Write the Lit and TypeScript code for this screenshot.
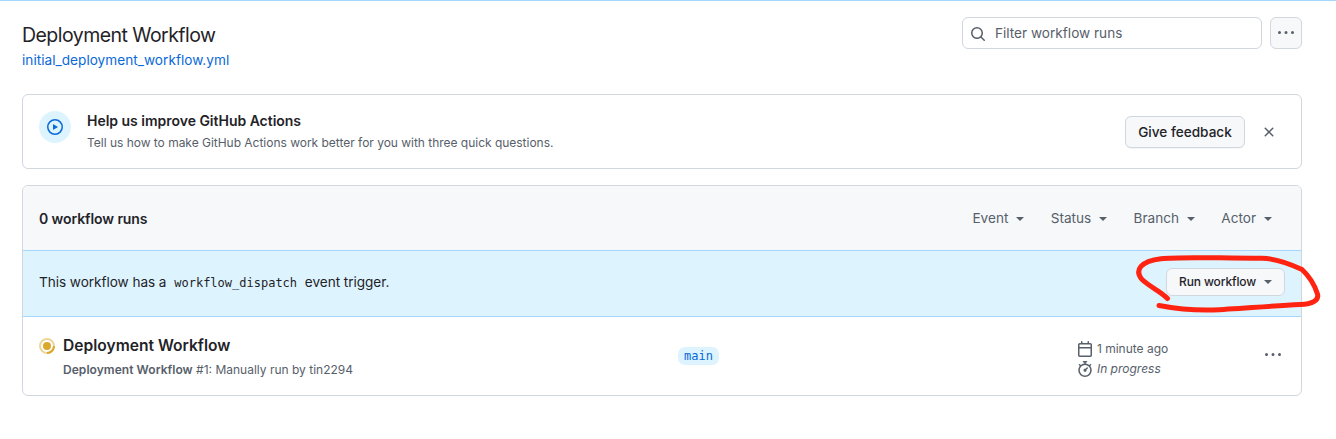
import { LitElement, html, css, svg } from "lit";
import { customElement } from "lit/decorators.js";

const icon = (d: string, cls = "", size = 16) => html`<svg class="icon ${cls}" width=${size} height=${size} viewBox="0 0 16 16" aria-hidden="true"><path fill-rule="evenodd" d=${d}></path></svg>`;

const SEARCH = "M10.68 11.74a6 6 0 0 1-7.922-8.982 6 6 0 0 1 8.982 7.922l3.04 3.04a.749.749 0 1 1-1.06 1.06ZM11.5 7a4.499 4.499 0 1 0-8.997 0A4.499 4.499 0 0 0 11.5 7Z";
const KEBAB = "M8 9a1.5 1.5 0 1 0 0-3 1.5 1.5 0 0 0 0 3ZM1.5 9a1.5 1.5 0 1 0 0-3 1.5 1.5 0 0 0 0 3Zm13 0a1.5 1.5 0 1 0 0-3 1.5 1.5 0 0 0 0 3Z";
const PLAY = "M8 0a8 8 0 1 1 0 16A8 8 0 0 1 8 0ZM1.5 8a6.5 6.5 0 1 0 13 0 6.5 6.5 0 0 0-13 0Zm4.879-2.773 4.264 2.559a.25.25 0 0 1 0 .428l-4.264 2.559A.25.25 0 0 1 6 10.559V5.442a.25.25 0 0 1 .379-.215Z";
const CLOSE = "M3.72 3.72a.75.75 0 0 1 1.06 0L8 6.94l3.22-3.22a.75.75 0 1 1 1.06 1.06L9.06 8l3.22 3.22a.75.75 0 1 1-1.06 1.06L8 9.06l-3.22 3.22a.75.75 0 0 1-1.06-1.06L6.94 8 3.72 4.78a.75.75 0 0 1 0-1.06Z";
const CALENDAR = "M4.75 0a.75.75 0 0 1 .75.75V2h5V.75a.75.75 0 0 1 1.5 0V2h1.25c.966 0 1.75.784 1.75 1.75v10.5A1.75 1.75 0 0 1 13.25 16H2.75A1.75 1.75 0 0 1 1 14.25V3.75C1 2.784 1.784 2 2.75 2H4V.75A.75.75 0 0 1 4.75 0ZM2.5 7.5v6.75c0 .138.112.25.25.25h10.5a.25.25 0 0 0 .25-.25V7.5Zm10.75-4H2.75a.25.25 0 0 0-.25.25V6h11V3.75a.25.25 0 0 0-.25-.25Z";
const STOPWATCH = "M5.75.75A.75.75 0 0 1 6.5 0h3a.75.75 0 0 1 0 1.5h-.75v1l-.001.041a6.724 6.724 0 0 1 3.464 1.435l.007-.006.75-.75a.749.749 0 1 1 1.06 1.06l-.75.75-.006.007a6.75 6.75 0 1 1-10.548 0L2.72 5.03l-.75-.75a.751.751 0 0 1 1.06-1.06l.75.75.007.006A6.72 6.72 0 0 1 7.25 2.541V1.5H6.5a.75.75 0 0 1-.75-.75ZM8 14.5a5.25 5.25 0 1 0 0-10.5 5.25 5.25 0 0 0 0 10.5Zm.389-6.7 1.33-1.33a.75.75 0 1 1 1.061 1.06L9.45 8.861A1.503 1.503 0 0 1 8 10.75a1.499 1.499 0 1 1 .389-2.95Z";

@customElement("app-root")
export class AppRoot extends LitElement {
  static styles = css`
    :host { display: block; position: relative; box-sizing: border-box; height: 439px; overflow: hidden; background: #fff; border-top: 1px solid #a6d8ff; padding: 16px 34px 0 22px; font: 13.6px/21px Inter, "Liberation Sans", sans-serif; color: #1f2328; }
    * { box-sizing: border-box; }
    .icon { display: block; flex: none; fill: #57606a; }
    .top { display: flex; align-items: flex-start; height: 77px; }
    .heading { flex: 1; padding-top: 3px; }
    h1 { margin: 0; font-size: 19.5px; line-height: 30px; font-weight: 400; letter-spacing: -.54px; }
    .file { display: block; color: #0969da; line-height: 20px; letter-spacing: .03px; text-decoration: none; }
    .filter { display: flex; align-items: center; gap: 9px; width: 300px; height: 32px; padding-left: 7px; border: 1px solid #d0d7de; border-radius: 6px; color: #57606a; }
    .filter .icon { margin-top: 2px; }
    .filter span { padding-top: 1px; }
    .more { display: flex; align-items: center; justify-content: center; width: 32px; height: 32px; margin-left: 8px; border: 1px solid #d0d7de; border-radius: 6px; background: #f6f8fa; }
    .notice { display: flex; height: 75px; padding: 16px; border: 1px solid #d0d7de; border-radius: 6px; }
    .badge { display: flex; align-items: center; justify-content: center; width: 32px; height: 32px; border-radius: 50%; background: #ddf4ff; }
    .badge .icon { fill: #0969da; }
    .message { flex: 1; padding-left: 16px; }
    .strong { font-weight: 600; }
    .message .strong { font-size: 14px; line-height: 20px; letter-spacing: -.02px; }
    .small { font-size: 12px; line-height: 18px; color: #57606a; }
    .message .small { margin-top: 3px; letter-spacing: -.02px; }
    .feedback { display: flex; align-items: center; justify-content: center; width: 120px; height: 32px; margin-top: 5px; border: 1px solid #d0d7de; border-radius: 6px; background: #f6f8fa; font-weight: 500; box-shadow: 0 1px 0 rgba(31,35,40,.04); }
    .close { margin: 13px 8px 0 16px; }
    .runs { margin-top: 16px; height: 211px; border: 1px solid #d0d7de; border-radius: 6px; overflow: hidden; }
    .bar { display: flex; align-items: center; height: 64px; padding: 0 29px 0 16px; background: #f6f8fa; }
    .bar .strong { flex: 1; font-size: 14px; letter-spacing: -.08px; padding-top: 1px; }
    .menus { display: flex; gap: 26.3px; color: #57606a; }
    .menu { display: flex; align-items: center; gap: 8px; height: 22px; }
    .caret { width: 8px; border: 4px solid transparent; border-top-color: currentColor; border-bottom: 0; }
    .menu .caret { margin-top: 2px; }
    .dispatch { display: flex; align-items: center; height: 67px; padding: 0 16px; border: solid #a6d8ff; border-width: 1px 0; background: #ddf4ff; }
    .dispatch p { flex: 1; margin: 0; padding-bottom: 2px; letter-spacing: -.05px; }
    code { font: 12px "DejaVu Sans Mono", monospace; letter-spacing: 0; }
    .dispatch code { padding: 0 4px; }
    .run-button { display: flex; align-items: center; gap: 8px; width: 119px; height: 28px; margin-bottom: 4px; padding-left: 12px; border: 1px solid #d0d7de; border-radius: 6px; background: #f6f8fa; font-size: 12px; font-weight: 500; letter-spacing: -.12px; }
    .run-button .caret { color: #57606a; margin-top: 1px; }
    .row { display: flex; height: 78px; padding: 0 20px 0 16px; }
    .status { margin-top: 21px; }
    .title { width: 623px; padding: 17px 0 0 8px; }
    .title .name { font-size: 15.6px; line-height: 24px; font-weight: 600; }
    .title .small { margin-top: 3px; }
    .title .small .strong { letter-spacing: .05px; }
    .branch { align-self: flex-start; height: 18px; margin-top: 30px; padding: 0 6px; border-radius: 7px; background: #ddf4ff; color: #0969da; line-height: 18px; }
    .meta { flex: 1; padding: 22px 0 0 358px; }
    .meta .small { display: flex; align-items: center; gap: 4px; height: 20px; }
    .meta .icon { margin-bottom: 1px; }
    .row .kebab { margin-top: 30px; }
    .mark { position: absolute; left: 1130px; top: 249px; pointer-events: none; }
  `;

  render() {
    return html`
      <header class="top">
        <div class="heading">
          <h1>Deployment Workflow</h1>
          <a class="file">initial_deployment_workflow.yml</a>
        </div>
        <div class="filter">${icon(SEARCH)}<span>Filter workflow runs</span></div>
        <div class="more">${icon(KEBAB)}</div>
      </header>
      <section class="notice">
        <div class="badge">${icon(PLAY)}</div>
        <div class="message">
          <div class="strong">Help us improve GitHub Actions</div>
          <div class="small tell">Tell us how to make GitHub Actions work better for you with three quick questions.</div>
        </div>
        <div class="feedback"><span>Give feedback</span></div>
        ${icon(CLOSE, "close")}
      </section>
      <section class="runs">
        <div class="bar">
          <div class="strong">0 workflow runs</div>
          <div class="menus">
            ${["Event", "Status", "Branch", "Actor"].map((m) => html`<div class="menu"><span>${m}</span><i class="caret"></i></div>`)}
          </div>
        </div>
        <div class="dispatch">
          <p>This workflow has a <code>workflow_dispatch</code> event trigger.</p>
          <div class="run-button"><span>Run workflow</span><i class="caret"></i></div>
        </div>
        <div class="row">
          <svg class="icon status" width="16" height="16" viewBox="0 0 16 16">
            ${svg`<circle cx="8" cy="8" r="7" fill="none" stroke="#dbab3a" stroke-opacity=".5" stroke-width="2"></circle>
            <path d="M15 8a7 7 0 0 1-7 7" fill="none" stroke="#dba82b" stroke-width="2"></path>
            <circle cx="8" cy="8" r="4" fill="#dba82b"></circle>`}
          </svg>
          <div class="title">
            <div class="name">Deployment Workflow</div>
            <div class="small"><span class="strong">Deployment Workflow</span> <span class="by">#1: Manually run by tin2294</span></div>
          </div>
          <code class="branch">main</code>
          <div class="meta">
            <div class="small">${icon(CALENDAR)}<span>1 minute ago</span></div>
            <div class="small">${icon(STOPWATCH)}<em>In progress</em></div>
          </div>
          ${icon(KEBAB, "kebab")}
        </div>
      </section>
      <svg class="mark" width="206" height="70" viewBox="1130 250 206 70" fill="none" stroke="#ff2412" stroke-width="5" stroke-linecap="round" stroke-linejoin="round">
        <path d="M1167.500 298.500C1161 291.500 1150 287 1142 279.500C1134 270 1141 261 1161 258.700C1180 256.500 1208 258 1262 258.300C1276 258.500 1288 263 1302 269.500C1309 276 1314 283 1317.500 294C1319 300 1313 304 1300 304.500C1270 306 1235 309 1213 310C1192 310.500 1172 308 1159 305.500"></path>
      </svg>`;
  }
}
